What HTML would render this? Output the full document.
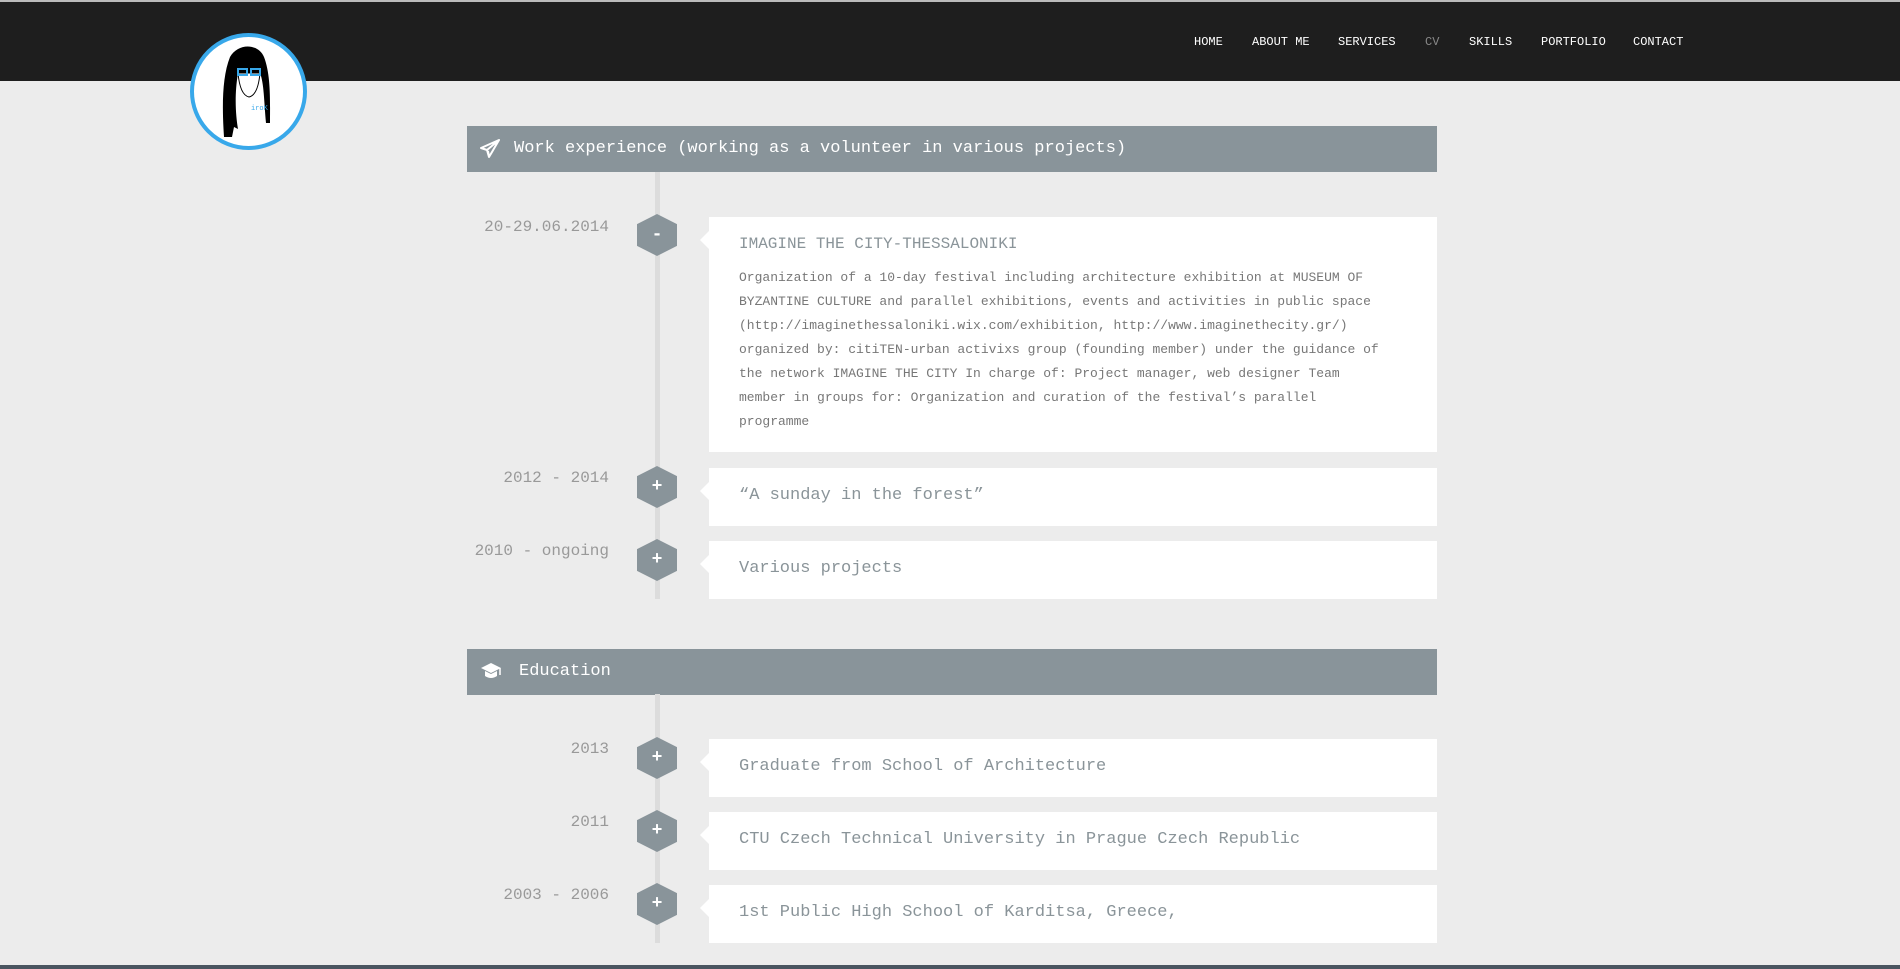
<!DOCTYPE html>
<html><head><meta charset="utf-8"><style>
*{margin:0;padding:0;box-sizing:border-box}
body{width:1900px;height:969px;background:#ececec;position:relative;overflow:hidden;font-family:"Liberation Mono","Courier New",monospace}
.top{position:absolute;left:0;top:0;width:1900px;height:2px;background:#bbb}
.hdr{position:absolute;left:0;top:2px;width:1900px;height:79px;background:#1e1e1e}
.nav a{position:absolute;top:35px;color:#fff;font-size:12px;text-decoration:none;font-family:"Liberation Mono",monospace}
.logo{position:absolute;left:190px;top:33px;width:117px;height:117px;border-radius:50%;background:#fff;border:4px solid #38a8ea;overflow:hidden}
.bar{position:absolute;left:467px;width:970px;height:46px;background:#89949a;color:#fff;font-size:17px;line-height:46px}
.line{position:absolute;left:655px;width:5px;background:#dcdcdc}
.hex{position:absolute;left:637px;width:40px;height:42px;background:#89949a;clip-path:polygon(50% 0,100% 24%,100% 76%,50% 100%,0 76%,0 24%);color:#fff;font-weight:bold;font-size:18px;text-align:center;line-height:42px}
.date{position:absolute;right:1291px;color:#999;font-size:16px;text-align:right;white-space:nowrap}
.card{position:absolute;left:709px;width:728px;background:#fff;color:#8a9499}
.card:before{content:"";position:absolute;left:-9px;top:14px;border-right:9px solid #fff;border-top:9px solid transparent;border-bottom:9px solid transparent}
.card .t{position:absolute;left:30px;font-size:17px;white-space:nowrap}
.body{position:absolute;left:30px;top:49px;width:645px;font-size:13px;line-height:24px;color:#777}
.btm{position:absolute;left:0;top:965px;width:1900px;height:4px;background:#4a5560}
</style></head><body>
<div class="top"></div>
<div class="hdr"></div>
<div class="nav">
<a style="left:1194px">HOME</a><a style="left:1252px">ABOUT ME</a><a style="left:1338px">SERVICES</a><a style="left:1425px;color:#888">CV</a><a style="left:1469px">SKILLS</a><a style="left:1541px">PORTFOLIO</a><a style="left:1633px">CONTACT</a>
</div>
<div class="logo"><svg width="109" height="109" viewBox="0 0 109 109">
<path d="M30 100 C28 70 28 40 36 20 C44 6 64 6 70 20 C77 38 76 64 76 86 L72 86 C70 64 70 46 66 36 L44 36 C40 60 42 80 44 92 L40 90 L38 100 Z" fill="#000"/>
<path d="M44 36 Q46 58 55 60 Q64 58 66 36 Z" fill="#fff" stroke="#000" stroke-width="1"/>
<rect x="44" y="32" width="9" height="6" fill="none" stroke="#38a8ea" stroke-width="2"/><rect x="57" y="32" width="9" height="6" fill="none" stroke="#38a8ea" stroke-width="2"/>
<text x="57" y="73" font-size="7" fill="#38a8ea" font-family="Liberation Mono">iroK</text>
</svg></div>

<div class="bar" style="top:126px"><svg style="position:absolute;left:13px;top:13px" width="20" height="20" viewBox="0 0 20 20"><path d="M19 1 L1 9 L7 11 L9 18 L12 13 Z M7 11 L19 1 M9 18 L8 12" fill="none" stroke="#fff" stroke-width="2" stroke-linejoin="round"/></svg><span style="position:absolute;left:47px">Work experience (working as a volunteer in various projects)</span></div>
<div class="line" style="top:172px;height:427px"></div>

<div class="date" style="top:218px">20-29.06.2014</div>
<div class="hex" style="top:214px">-</div>
<div class="card" style="top:217px;height:235px"><div class="t" style="top:18px;font-size:16px">IMAGINE THE CITY-THESSALONIKI</div>
<div class="body">Organization of a 10-day festival including architecture exhibition at MUSEUM OF BYZANTINE CULTURE and parallel exhibitions, events and activities in public space (http://imaginethessaloniki.wix.com/exhibition, http://www.imaginethecity.gr/) organized by: citiTEN-urban activixs group (founding member) under the guidance of the network IMAGINE THE CITY In charge of: Project manager, web designer Team member in groups for: Organization and curation of the festival’s parallel programme</div></div>

<div class="date" style="top:469px">2012 - 2014</div>
<div class="hex" style="top:466px">+</div>
<div class="card" style="top:468px;height:58px"><div class="t" style="top:18px">“A sunday in the forest”</div></div>

<div class="date" style="top:542px">2010 - ongoing</div>
<div class="hex" style="top:539px">+</div>
<div class="card" style="top:541px;height:58px"><div class="t" style="top:18px">Various projects</div></div>

<div class="bar" style="top:649px"><svg style="position:absolute;left:13px;top:13px" width="22" height="20" viewBox="0 0 22 20"><path d="M1 6 L11 1 L21 6 L11 11 Z" fill="#fff"/><path d="M5 9 L5 14 Q11 18 17 14 L17 9 L11 12 Z" fill="#fff"/><path d="M20 6 L20 13" stroke="#fff" stroke-width="1.5"/></svg><span style="position:absolute;left:52px">Education</span></div>
<div class="line" style="top:694px;height:249px"></div>

<div class="date" style="top:740px">2013</div>
<div class="hex" style="top:737px">+</div>
<div class="card" style="top:739px;height:58px"><div class="t" style="top:18px">Graduate from School of Architecture</div></div>

<div class="date" style="top:813px">2011</div>
<div class="hex" style="top:810px">+</div>
<div class="card" style="top:812px;height:58px"><div class="t" style="top:18px">CTU Czech Technical University in Prague Czech Republic</div></div>

<div class="date" style="top:886px">2003 - 2006</div>
<div class="hex" style="top:883px">+</div>
<div class="card" style="top:885px;height:58px"><div class="t" style="top:18px">1st Public High School of Karditsa, Greece,</div></div>

<div class="btm"></div>
</body></html>
